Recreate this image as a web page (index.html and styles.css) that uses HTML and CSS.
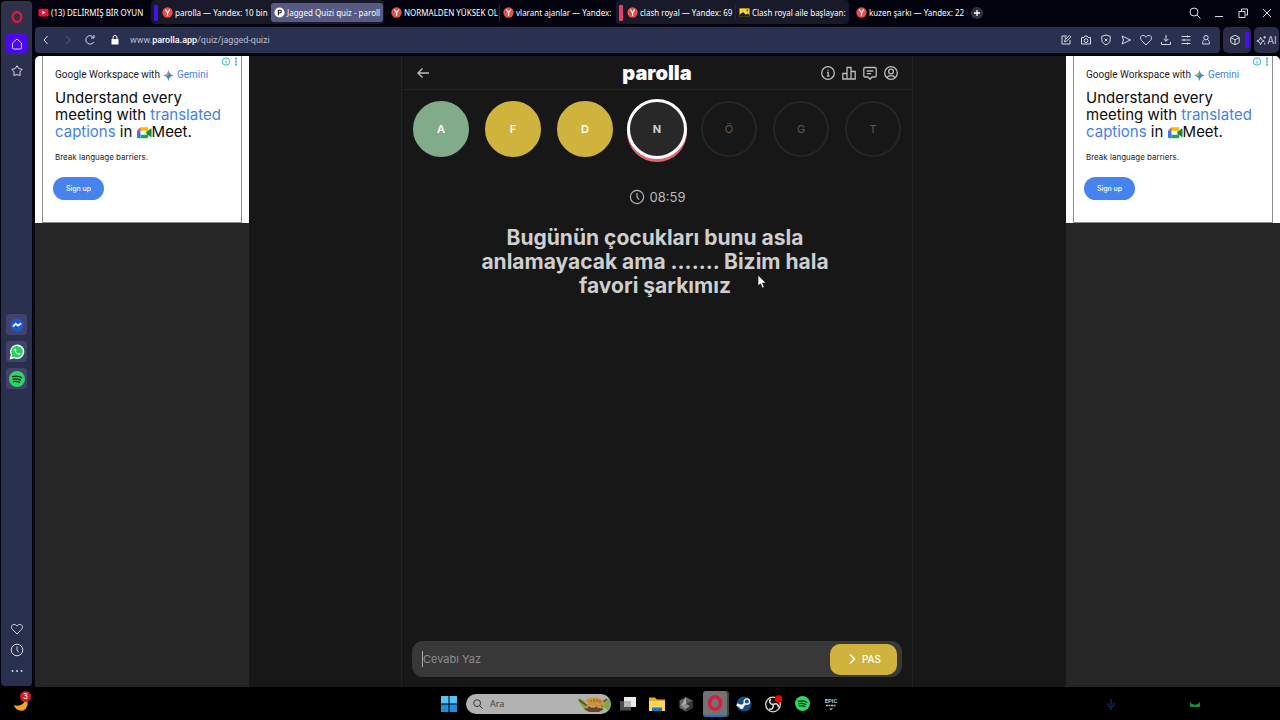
FILE: index.html
```html
<!DOCTYPE html>
<html lang="tr">
<head>
<meta charset="utf-8">
<title>Jagged Quizi quiz - parolla</title>
<link rel="stylesheet" href="styles.css">
</head>
<body>
<svg class="defs" aria-hidden="true">
  <symbol id="yandex" viewBox="0 0 12 12"><circle cx="6" cy="6" r="5.6" fill="#e2504f"/><path d="M3.7 2.8 6.1 6.4V9.6M8.4 2.8 6.1 6.4" fill="none" stroke="#fff" stroke-width="1.2"/></symbol>
  <symbol id="spotify" viewBox="0 0 16 16"><circle cx="8" cy="8" r="8" fill="#2fd566"/><path d="M3.6 5.7c3-.9 6.200-.6 8.900.9M4 8.200c2.600-.7 5.200-.4 7.500.9M4.400 10.600c2.100-.5 4.300-.3 6.200.8" fill="none" stroke="#10251a" stroke-width="1.300" stroke-linecap="round"/></symbol>
  <symbol id="gemini" viewBox="0 0 12 12"><path d="M6 0C6.500 3.500 8.500 5.500 12 6 8.500 6.500 6.500 8.500 6 12 5.500 8.500 3.500 6.500 0 6 3.500 5.500 5.500 3.500 6 0Z" fill="#3f83ee"/><path d="M6 0C5.500 3.500 3.500 5.500 0 6l4.500.5L6 5Z" fill="#d8a63c"/><path d="M0 6c3.500.5 5.500 2.500 6 6V8L3 6Z" fill="#49a866"/><path d="M6 0 6 4 7.700 4.300C6.700 3.200 6.200 2 6 0Z" fill="#dd5550"/></symbol>
  <symbol id="meet" viewBox="0 0 16 13"><path d="M3.700 4.500h5.800V9H3.700Z" fill="#fff"/><path d="M3.500 1H11v3.500H3.500Z" fill="#fbbc04"/><path d="M0 4.500 3.700 1v3.500Z" fill="#ea4335"/><path d="M0 4.500h3.700v8H1.200A1.200 1.200 0 0 1 0 11.300Z" fill="#3978e8"/><path d="M3.700 9H9.500L12 7v4.300a1.200 1.200 0 0 1-1.200 1.200H3.700Z" fill="#23a455"/><path d="M9.500 1H11a1 1 0 0 1 1 1V7L9.500 6.800Z" fill="#fbbc04"/><path d="M9.500 6.800 14.500 2.300c.5-.4 1-.1 1 .4v8.100c0 .5-.6.800-1 .4Z" fill="#168541"/></symbol>
  <symbol id="adinfo" viewBox="0 0 10 10"><circle cx="5" cy="5" r="3.700" fill="none" stroke="#36b5bd"/><path d="M5 4.500v2.600M5 2.800v.9" stroke="#36b5bd"/></symbol>
  <symbol id="heart" viewBox="0 0 14 14"><path d="M7 12 2.500 7.400C.6 5.300 1.700 2.400 4.100 2.400 5.500 2.400 6.500 3.200 7 4.200 7.500 3.200 8.500 2.400 9.900 2.400c2.400 0 3.500 2.900 1.600 5Z"/></symbol>
  <symbol id="clock" viewBox="0 0 14 14"><circle cx="7" cy="7" r="5.800"/><path d="M7 3.500V7l1.800 2.300"/></symbol>
  <symbol id="search" viewBox="0 0 14 14"><circle cx="6" cy="6" r="4"/><path d="m9 9 3.500 3.500"/></symbol>
</svg>

<div class="window">
  <nav class="sidebar" aria-label="Kenar çubuğu">
    <button class="side opera" aria-label="Opera"><svg viewBox="0 0 14 14"><ellipse cx="7" cy="7" rx="4.300" ry="5" stroke="#d51c3f" stroke-width="2.400"/></svg></button>
    <button class="side home" aria-label="Ana sayfa"><svg viewBox="0 0 14 14"><path d="M2.500 6 7 2l4.500 4v4.800a1.200 1.200 0 0 1-1.200 1.200H3.700a1.200 1.200 0 0 1-1.200-1.200Z"/></svg></button>
    <button class="side" aria-label="Yer imleri"><svg viewBox="0 0 14 14"><path d="m7 1.700 1.700 2.800 3.400.8-2.200 2.600.3 3.500L7 10.700l-3.200.7.3-3.500-2.200-2.600 3.400-.8Z"/></svg></button>
    <div class="apps">
      <button class="side app" aria-label="Messenger"><svg viewBox="0 0 16 16"><circle cx="8" cy="8" r="6.500" fill="#1a58d8" stroke="none"/><path d="m4 9.700 2.700-3 2.400 2 3-2.500" stroke="#fff" stroke-width="1.800"/></svg></button>
      <button class="side app" aria-label="WhatsApp"><svg viewBox="0 0 16 16"><path d="m1.500 14.500 1-3.500a6.500 6.500 0 1 1 2.600 2.500Z" fill="#28cf62" stroke="#fff" stroke-width="1.300"/><path d="M5.300 5c-.3 2.800 2.700 5.900 5.500 5.900l.6-1.300-1.700-.9-.8.7C7.900 9 7.100 8.100 6.800 7.200l.7-.8-.7-1.700Z" fill="#fff" stroke="none"/></svg></button>
      <button class="side app" aria-label="Spotify"><svg><use href="#spotify" stroke="none"/></svg></button>
    </div>
    <div class="side-end">
      <button class="side" aria-label="Beğeniler"><svg><use href="#heart"/></svg></button>
      <button class="side" aria-label="Geçmiş"><svg><use href="#clock"/></svg></button>
      <button class="side" aria-label="Diğer"><svg viewBox="0 0 14 14"><path d="M2.500 7h.1M7 7h.1M11.500 7h.1" stroke-width="1.800" stroke-linecap="round"/></svg></button>
    </div>
  </nav>

  <div class="browser">
    <header class="tabs">
      <button class="tab"><svg viewBox="0 0 12 12"><rect x=".5" y="1.800" width="11" height="8.500" rx="2" fill="#ef1237"/><path d="m4.700 4 3.500 2-3.500 2Z" fill="#fff"/></svg><span>(13) DELİRMİŞ BİR OYUN</span></button>
      <div class="group purple">
        <button class="tab"><svg><use href="#yandex"/></svg><span>parolla — Yandex: 10 bin</span></button>
        <button class="tab active"><svg viewBox="0 0 12 12"><circle cx="6" cy="6" r="5.500" fill="#fff"/><path d="M4.800 9V3.500h1.700a1.500 1.500 0 0 1 0 3H4.800" fill="none" stroke="#222" stroke-width="1.200"/></svg><span>Jagged Quizi quiz - paroll</span></button>
      </div>
      <div class="pair">
        <button class="tab"><svg><use href="#yandex"/></svg><span>NORMALDEN YÜKSEK OL</span></button>
        <button class="tab split"><svg><use href="#yandex"/></svg><span>vlarant ajanlar — Yandex:</span></button>
      </div>
      <div class="group pink">
        <button class="tab"><svg><use href="#yandex"/></svg><span>clash royal — Yandex: 69</span></button>
        <button class="tab split"><svg viewBox="0 0 12 12"><path d="M.5 1.500h11v9h-11Z" fill="#f6d92a"/><path d="M.5 10.500v-2l4-3L7.500 8.500 9.500 7l2 2v1.500Z" fill="#1c1a18"/><path d="M8 2.700h2v2H8Z" fill="#d92c27"/></svg><span>Clash royal aile başlayan:</span></button>
      </div>
      <button class="tab"><svg><use href="#yandex"/></svg><span>kuzen şarkı — Yandex: 22</span></button>
      <button class="new-tab" aria-label="Yeni sekme"><svg viewBox="0 0 12 12"><circle cx="6" cy="6" r="6" fill="#30323f"/><path d="M6 3v6M3 6h6" stroke="#fff" stroke-width="1.300"/></svg></button>
      <div class="controls">
        <button class="icon" aria-label="Ara"><svg><use href="#search"/></svg></button>
        <button class="icon" aria-label="Simge durumuna küçült"><svg viewBox="0 0 14 14"><path d="M3 10.500h8"/></svg></button>
        <button class="icon" aria-label="Geri yükle"><svg viewBox="0 0 14 14"><path d="M3 5.500h6v6H3ZM5.500 5V3H11.500v6H9.500"/></svg></button>
        <button class="icon" aria-label="Kapat"><svg viewBox="0 0 14 14"><path d="m3 3 8 8M11 3l-8 8"/></svg></button>
      </div>
    </header>

    <div class="toolbar">
      <div class="address">
        <button class="icon" aria-label="Geri"><svg viewBox="0 0 14 14"><path d="M8.500 3 5 7l3.500 4"/></svg></button>
        <button class="icon dim" aria-label="İleri"><svg viewBox="0 0 14 14"><path d="M5.500 3 9 7l-3.500 4"/></svg></button>
        <button class="icon" aria-label="Yenile"><svg viewBox="0 0 14 14"><path d="M10.700 9A4.200 4.200 0 1 1 10.500 4.500M11 2v3H8"/></svg></button>
        <button class="icon lock" aria-label="Site bilgisi"><svg viewBox="0 0 14 14"><rect x="3.500" y="6" width="7" height="5.500" rx=".5" fill="#fff" stroke="none"/><path d="M5 6V4.500a2 2 0 0 1 4 0V6" stroke="#fff"/></svg></button>
        <a class="url" href="#quiz">www.<b>parolla.app</b>/quiz/jagged-quizi</a>
        <div class="actions">
          <button class="icon" aria-label="Düzenle"><svg viewBox="0 0 14 14"><path d="M8 3H3v8h8V7M5.500 8.700l.4-2L10.500 2.500l1.400 1.400L7.500 8.200ZM5.500 4.500l2 1"/></svg></button>
          <button class="icon" aria-label="Anlık görüntü"><svg viewBox="0 0 14 14"><path d="M2.500 4.500H5L6 3h2l1 1.500h2.500v6.500h-9Z"/><circle cx="7" cy="7.600" r="1.900"/></svg></button>
          <button class="icon" aria-label="Koruma"><svg viewBox="0 0 14 14"><path d="m7 2 4.200 1.300v3.500c0 2.600-2.200 4.200-4.200 5-2-.8-4.200-2.400-4.200-5V3.300ZM5.700 5.700l2.600 2.600M8.300 5.700 5.700 8.300"/></svg></button>
          <button class="icon" aria-label="Gönder"><svg viewBox="0 0 14 14"><path d="m3 3 8.500 4L3 11l1.500-4Z"/></svg></button>
          <button class="icon" aria-label="Beğen"><svg><use href="#heart"/></svg></button>
          <button class="icon" aria-label="İndirilenler"><svg viewBox="0 0 14 14"><path d="M7 2v6M4.700 6 7 8.300 9.300 6M2.500 9v2.500h9V9"/></svg></button>
          <button class="icon" aria-label="Ayarlar"><svg viewBox="0 0 14 14"><path d="M2.500 3.500h9M2.500 7h9M2.500 10.500h9M8.500 2.500v2M5 6v2M8.500 9.500v2"/></svg></button>
          <button class="icon" aria-label="Profil"><svg viewBox="0 0 14 14"><circle cx="7" cy="4.700" r="2.200"/><path d="M5.500 6.500C3.800 7.500 3.500 9 3.700 11h6.600c.2-2-.1-3.500-1.800-4.500"/></svg></button>
        </div>
      </div>
      <button class="tool cube" aria-label="Çalışma alanı"><svg viewBox="0 0 14 14"><path d="m7 2.200 4.200 2.300v5L7 11.800 2.800 9.500v-5ZM2.800 4.500 7 6.900l4.200-2.400M7 6.900v4.900"/></svg></button>
      <button class="tool ai"><svg viewBox="0 0 12 14"><path d="M5 3.500 6.200 6.300 9 7.500 6.200 8.700 5 11.500 3.800 8.700 1 7.500 3.800 6.300ZM9.500 2v3M8 3.500h3M9.500 9.500v2"/></svg>AI</button>
    </div>

    <div class="page" id="quiz">
      <aside class="rail">
        <section class="ad">
          <div class="ad-box">
            <div class="ad-marks"><svg><use href="#adinfo"/></svg><svg class="dots" viewBox="0 0 4 10"><path d="M2 1v2M2 4v2M2 7v2" stroke="#36a8b0" stroke-width="1.700"/></svg></div>
            <p class="ad-brand">Google Workspace with <svg><use href="#gemini"/></svg> <em>Gemini</em></p>
            <h2>Understand every<br>meeting with <em>translated</em><br><em>captions</em> in <svg><use href="#meet"/></svg>Meet.</h2>
            <p class="ad-note">Break language barriers.</p>
            <button class="signup">Sign up</button>
          </div>
        </section>
      </aside>

      <main class="quiz">
        <header class="quiz-head">
          <button class="back" aria-label="Geri dön"><svg viewBox="0 0 16 16"><path d="M14 8H3M7.500 3.500 3 8l4.500 4.500"/></svg></button>
          <h1>parolla</h1>
          <div class="quiz-tools">
            <button aria-label="Bilgi"><svg viewBox="0 0 16 16"><circle cx="8" cy="8" r="6.300"/><path d="M7 7.300h1.200v3.700M7 11h2.500M8 4.700v1"/></svg></button>
            <button aria-label="İstatistik"><svg viewBox="0 0 16 16"><path d="M1.800 8.500h4.200v5.500H1.800ZM6 2.500h4v11.500H6ZM10 6.500h4.200V14H10Z"/></svg></button>
            <button aria-label="Yorumlar"><svg viewBox="0 0 16 16"><path d="M3 2.500h10a1.200 1.200 0 0 1 1.200 1.200v7.100A1.200 1.200 0 0 1 13 12h-3l-2 2.200L6 12H3a1.200 1.200 0 0 1-1.200-1.200V3.700A1.200 1.200 0 0 1 3 2.500ZM4.700 6h6.600M4.700 8.700h4.500"/></svg></button>
            <button aria-label="Hesap"><svg viewBox="0 0 16 16"><circle cx="8" cy="8" r="6.300"/><circle cx="8" cy="6.500" r="2.400"/><path d="M3.900 12.500c2-2.500 6.200-2.500 8.200 0"/></svg></button>
          </div>
        </header>
        <ol class="letters">
          <li class="right">A</li><li class="passed">F</li><li class="passed">D</li><li class="current">N</li><li>Ö</li><li>G</li><li>T</li>
        </ol>
        <p class="timer"><svg><use href="#clock"/></svg>08:59</p>
        <p class="question">Bugünün çocukları bunu asla anlamayacak ama ....... Bizim hala favori şarkımız</p>
        <form class="answer">
          <input type="text" placeholder="Cevabı Yaz" aria-label="Cevabı Yaz">
          <button type="button" class="pass"><svg viewBox="0 0 12 12"><path d="m4 1.500 4.500 4.500L4 10.500"/></svg>PAS</button>
        </form>
      </main>

      <aside class="rail">
        <section class="ad">
          <div class="ad-box">
            <div class="ad-marks"><svg><use href="#adinfo"/></svg><svg class="dots" viewBox="0 0 4 10"><path d="M2 1v2M2 4v2M2 7v2" stroke="#36a8b0" stroke-width="1.700"/></svg></div>
            <p class="ad-brand">Google Workspace with <svg><use href="#gemini"/></svg> <em>Gemini</em></p>
            <h2>Understand every<br>meeting with <em>translated</em><br><em>captions</em> in <svg><use href="#meet"/></svg>Meet.</h2>
            <p class="ad-note">Break language barriers.</p>
            <button class="signup">Sign up</button>
          </div>
        </section>
      </aside>
    </div>
  </div>
</div>

<footer class="taskbar">
  <button class="weather" aria-label="Hava durumu"><svg viewBox="0 0 20 20"><path d="M14.500 2C15.500 9 10 13.500 2 11.500 4 17.500 11 19.500 15 15.500c3.500-3.500 3-10-.5-13.500Z" fill="#f4a12c"/></svg><span class="count">3</span></button>
  <div class="dock">
    <button class="task" aria-label="Başlat"><svg viewBox="0 0 18 18"><path d="M1 1h7.500v7.500H1ZM9.500 1H17v7.500H9.500Z" fill="#57c3f3"/><path d="M1 9.500h7.500V17H1ZM9.500 9.500H17V17H9.500Z" fill="#1b8fdd"/></svg></button>
    <label class="find"><svg><use href="#search"/></svg><input type="text" placeholder="Ara" aria-label="Ara"><svg class="lizard" viewBox="0 0 34 18"><path d="M1 3c5 1 7 4 9 7l6 6H9C6 12 2 9 1 3ZM33 4c-4 1-6 4-7 8l5 3c2-3 3-7 2-11Z" fill="#79ad3d"/><path d="m2 5 14 10 14-11" fill="none" stroke="#754a27" stroke-width="2"/><path d="M8 6c3-4 6-4 8-3 5-1 9 0 11 4 1 4-1 8-5 8-3 0-3-4-1-5-3 2-6 2-8 0l-3 3-1-1 2-4Z" fill="#c9963e"/><path d="M14 5v2M17 4v3M20 4v3M23 5v3M24 10l2 2" stroke="#80552b" stroke-width="1"/><path d="M7 14c5-2 14-2 20 0l-5 3H12Z" fill="#6d4328"/></svg></label>
    <button class="task" aria-label="Görev görünümü"><svg viewBox="0 0 18 18"><path d="M1 6h11v9.500H1Z" fill="#4c4c4c"/><path d="M5 2h12v10H5Z" fill="#ececec"/><path d="M5 6h7v6H5Z" fill="#b7b7b7"/></svg></button>
    <button class="task" aria-label="Dosya Gezgini"><svg viewBox="0 0 18 18"><path d="M1 2.500h6l2 2h8v11H1Z" fill="#e8ac24"/><path d="M1 6h16v10H1Z" fill="#ffd65a"/><path d="M4 16v-3.500h10V16Z" fill="#1678c6"/></svg></button>
    <button class="task" aria-label="Oyun"><svg viewBox="0 0 18 18"><path d="m9 2 6.500 3.500v7.500L9 16.500 2.500 13V5.500Z" fill="#606469"/><path d="m9 2-5 9 5-2Z" fill="#aeb2b5"/><path d="m9 9 6.500-3.500v7.500L9 16.500Z" fill="#34373a"/><path d="M4 11 9 9l4 2-4 3Z" fill="#8c9195"/></svg></button>
    <button class="task running" aria-label="Opera GX"><svg viewBox="0 0 18 18"><ellipse cx="9" cy="9" rx="5.500" ry="6.200" fill="none" stroke="#d61e43" stroke-width="3.600"/></svg></button>
    <button class="task" aria-label="Steam"><svg viewBox="0 0 18 18"><circle cx="9" cy="9" r="7.500" fill="#164d80"/><path d="m1.800 9.500 5 2.200 4.700-4.500" fill="none" stroke="#fff" stroke-width="2.500"/><circle cx="11.800" cy="6.500" r="2.700" fill="#194f80" stroke="#fff" stroke-width="1.300"/><circle cx="6.500" cy="11.700" r="2.200" fill="#fff"/></svg></button>
    <button class="task" aria-label="OBS"><svg viewBox="0 0 18 18"><circle cx="9" cy="9.500" r="7.300" fill="#090909" stroke="#ddd" stroke-width="1.300"/><path d="M9 9.500C5.500 9 5 6.500 6.500 4M9 9.500c3.500-2 5.500 0 5.500 3M9 9.500c1 3.500-1.500 5.500-4 4.500" fill="none" stroke="#ddd" stroke-width="1.500"/><circle cx="14.500" cy="4" r="3.800" fill="#f10000"/></svg></button>
    <button class="task" aria-label="Spotify"><svg class="round" viewBox="0 0 16 16"><use href="#spotify"/></svg></button>
    <button class="task epic" aria-label="Epic Games"><span>EPIC</span><svg viewBox="0 0 12 7"><path d="M1 1.500h10" stroke="#bbb" stroke-width="1.500" stroke-dasharray="2 .5"/><path d="M4 4.500h4L6 6Z" fill="#ddd"/></svg></button>
  </div>
  <div class="tray"><svg viewBox="0 0 12 14"><path d="M6 2v6M3 6c0 5 6 5 6 0M6 10v3" fill="none" stroke="#10265c" stroke-width="1.500"/></svg><svg viewBox="0 0 12 14"><path d="M1 5 3 7h1l2 1 2-1h1l2-2v5H1Z" fill="#198b37"/></svg></div>
</footer>

<svg class="pointer" viewBox="0 0 10 15" aria-hidden="true"><path d="M1 1v11l2.500-2.300L5.300 14l2-.8-1.800-4.100H9Z" fill="#fff" stroke="#111" stroke-width=".7"/></svg>
</body>
</html>
```
FILE: styles.css
```css
*, ::before, ::after { box-sizing: border-box; }
body { margin: 0; height: 100vh; display: flex; flex-direction: column; overflow: hidden; background: #02030f; color: #fff; font-family: Inter, "Noto Sans", sans-serif; }
button { border: 0; padding: 0; background: none; color: inherit; font: inherit; display: flex; align-items: center; justify-content: center; flex: none; }
svg { fill: none; stroke-width: 1; flex: none; }
p, h1, h2, ol { margin: 0; padding: 0; }
em { font-style: normal; color: #467fe5; }
.defs { position: absolute; width: 0; height: 0; }
.window { flex: 1; min-height: 0; display: flex; gap: 3px; }

.sidebar { width: 31px; margin: 1px 0 1px 1px; padding-top: 5px; display: flex; flex-direction: column; align-items: center; gap: 6px; border-radius: 4px; background: linear-gradient(#303247, #29304e 12%, #29304e); }
.side { width: 21px; height: 21px; border-radius: 4px; stroke: #d4d7e5; }
.side svg { width: 14px; height: 14px; }
.sidebar .home { background: #4b08ef; }
.apps { margin-top: auto; display: flex; flex-direction: column; gap: 6px; }
.app { background: #41436b; }
.app svg { width: 16px; height: 16px; }
.side-end { margin-top: 223px; padding-bottom: 5px; display: flex; flex-direction: column; }

.browser { flex: 1; min-width: 0; display: flex; flex-direction: column; }
.tabs { height: 27px; display: flex; align-items: flex-start; gap: 4px; font-family: "Noto Sans", sans-serif; font-size: 8px; }
.tab { width: 112px; height: 19px; margin-top: 3px; padding: 0 0 0 3px; gap: 2px; justify-content: flex-start; border-radius: 3px; }
.tab svg { width: 11px; height: 11px; }
.tab span { white-space: nowrap; line-height: 18px; }
.active { background: #575a82; }
.split { box-shadow: -1px 0 #252735; }
.pair, .group { display: flex; }
.group { height: 24px; padding: 0 1px 0 8px; background: #181a29; border-radius: 4px; position: relative; }
.group::before { content: ""; position: absolute; left: 3px; top: 5px; width: 4px; height: 16px; border-radius: 1px; background: #4613e6; }
.pink::before { background: #df4269; }
.new-tab { width: 12px; height: 12px; margin: 7px 0 0 2px; }
.new-tab svg { width: 12px; height: 12px; }
.controls { margin: 5px 6px 0 auto; display: flex; gap: 9px; }
.icon { width: 15px; height: 15px; stroke: #d7dae7; }
.icon svg { width: 14px; height: 14px; }
.dim { opacity: .3; }

.toolbar { height: 26px; margin: 0 1px 3px 0; display: flex; gap: 3px; }
.address { flex: 1; display: flex; align-items: center; gap: 7px; padding: 0 7px 0 3px; border-radius: 4px; background: #2a3150; }
.address .lock { margin-left: 3px; }
.url { margin-left: 1px; color: #b7bfd5; text-decoration: none; font: 9px Roboto, "Noto Sans", sans-serif; }
.url b { color: #fff; font-weight: 500; }
.actions { margin-left: auto; display: flex; gap: 5px; }
.tool { width: 28px; border-radius: 5px; background: #2a2d47; stroke: #d7dae7; }
.cube { gap: 3px; padding-left: 3px; }
.cube::after { content: ""; width: 4px; height: 16px; background: #4810ee; }
.cube svg { width: 14px; height: 14px; }
.ai { width: 25px; font-size: 10px; color: #c5c8da; }
.ai svg { width: 11px; height: 13px; }

.page { flex: 1; min-height: 0; display: flex; justify-content: space-between; background: #171717; border-radius: 5px 5px 0 0; overflow: hidden; }
.rail { width: 214px; background: #262626; }
.ad { height: 167px; padding: 0 7px; background: #fff; color: #1b1b1d; }
.ad-box { height: 100%; position: relative; border: 1px solid #8c8c8c; border-top: 0; padding: 12px 0 0 12px; display: flex; flex-direction: column; align-items: flex-start; white-space: nowrap; }
.ad-marks { position: absolute; top: 0; right: 3px; display: flex; gap: 3px; }
.ad-marks svg { width: 10px; height: 11px; }
.ad-marks .dots { width: 4px; }
.ad-brand { font-family: Roboto, sans-serif; font-size: 10px; line-height: 14px; display: flex; align-items: center; gap: 3px; }
.ad-brand svg { width: 11px; height: 11px; }
.ad h2 { margin-top: 7px; font-size: 15px; font-weight: 400; line-height: 17px; color: #0b0b0c; }
.ad h2 svg { width: 15px; height: 13px; vertical-align: -2px; }
.ad-note { margin-top: 11px; font-size: 8px; line-height: 12px; }
.signup { width: 51px; height: 23px; margin: 14px 0 0 -2px; border-radius: 12px; background: #4683ef; color: #fff; font-size: 7px; font-weight: 500; }

.quiz { width: 512px; margin-right: 1px; display: flex; flex-direction: column; align-items: center; border: solid #222; border-width: 0 1px; }
.quiz-head { align-self: stretch; height: 34px; padding: 0 13px; display: grid; grid-template-columns: 1fr auto 1fr; align-items: center; border-bottom: 1px solid #222; stroke: #bdbdbd; }
.quiz-head svg { width: 16px; height: 16px; stroke-width: 1.3; display: block; }
.quiz-head h1 { font-size: 20px; font-weight: 900; line-height: 32px; }
.back { justify-self: start; }
.quiz-tools { display: flex; justify-content: flex-end; gap: 5px; }
.letters { list-style: none; margin-top: 9px; display: flex; gap: 16px; }
.letters li { width: 56px; height: 60px; display: grid; place-items: center; position: relative; color: #5a5a5a; font-size: 11px; z-index: 0; }
.letters li::before { content: ""; position: absolute; inset: 2px 0; z-index: -1; border: 2px solid #262626; border-radius: 50%; }
.letters .right, .letters .passed { color: #fff; font-weight: 600; }
.letters .right::before { background: #82ab8c; border-color: #82ab8c; }
.letters .passed::before { background: #d0b33c; border-color: #d0b33c; }
.letters .current { color: #d1d1d1; font-weight: 700; }
.letters .current::before { inset: 0 -2px; border: 3px solid #fff; background: #282828; box-shadow: 0 3px #df6672; }
.timer { margin-top: 29px; display: flex; align-items: center; gap: 5px; color: #bababa; font-size: 13px; line-height: 18px; }
.timer svg { width: 16px; height: 16px; stroke: #bababa; }
.question { width: 360px; margin-top: 20px; padding-right: 4px; text-align: center; color: #cfcfcf; font-size: 21px; font-weight: 700; line-height: 24px; }
.answer { width: 490px; height: 36px; margin: auto 0 10px; display: flex; align-items: center; padding: 0 5px 0 10px; border-radius: 11px; background: #383838; }
.answer input { flex: 1; min-width: 0; height: 16px; padding: 0; border: 0; border-left: 1px solid #aaa; outline: 0; background: none; color: #ddd; font: 11px Inter, sans-serif; }
.answer input::placeholder { color: #8c8c8c; }
.pass { width: 67px; height: 31px; gap: 4px; border-radius: 10px; background: #d0b33c; font-size: 10px; font-weight: 500; stroke: #fff; }
.pass svg { width: 12px; height: 12px; stroke-width: 1.4; }

.taskbar { height: 33px; display: grid; grid-template-columns: 1fr auto 1fr; align-items: center; background: #000; }
.weather { position: relative; justify-self: start; margin-left: 12px; }
.weather svg { width: 18px; height: 18px; }
.count { position: absolute; top: -4px; right: -1px; width: 11px; height: 11px; border-radius: 50%; background: #c51f2c; font-size: 8px; line-height: 11px; }
.dock { display: flex; align-items: center; gap: 5px; }
.task { width: 24px; height: 26px; }
.task svg { width: 18px; height: 18px; }
.task .round { width: 15px; height: 15px; }
.running { border-radius: 3px; background: #737373; border-bottom: 2px solid #1678c6; box-shadow: 2px 0 #444; }
.find { width: 145px; height: 20px; padding: 0 0 0 6px; display: flex; align-items: center; border-radius: 10px; background: #b2b2b2; overflow: hidden; stroke: #222; }
.find svg { width: 12px; height: 12px; }
.find .lizard { width: 34px; height: 18px; stroke: none; }
.find input { flex: 1; min-width: 0; border: 0; padding: 0 0 0 6px; background: none; outline: 0; font: 9px "Noto Sans", sans-serif; }
.find input::placeholder { color: #424242; }
.epic { flex-direction: column; font: 6px Roboto, sans-serif; }
.task.epic svg { width: 12px; height: 7px; }
.tray { justify-self: end; display: flex; gap: 72px; margin-right: 79px; }
.tray svg { width: 12px; height: 14px; }
.pointer { position: absolute; left: 757px; top: 274px; width: 10px; height: 15px; }
```
